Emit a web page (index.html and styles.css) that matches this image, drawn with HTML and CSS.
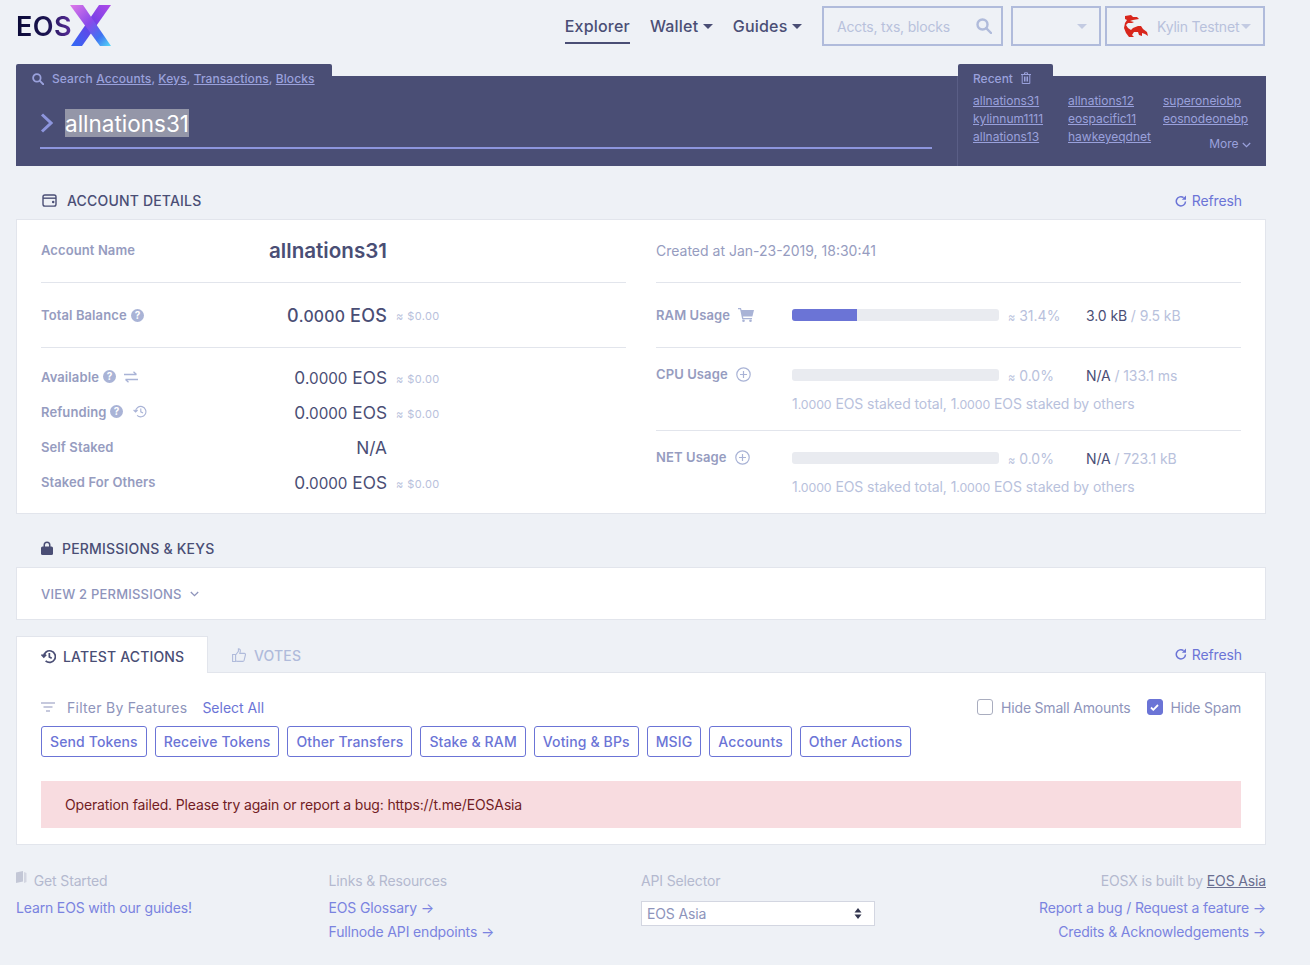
FILE: index.html
```html
<!DOCTYPE html>
<html>
    <head>
        <title>EOSX</title>
        <link rel="stylesheet" href="styles.css">
    </head>
    <body>
        <header class="topbar">
            <a class="logo">
                <span class="logo-text">EOS</span>
                <svg class="logo-x" width="41" height="41" viewBox="0 0 41 41">
                    <defs>
                        <linearGradient id="x-a" x1="0" y1="0" x2="1" y2="1">
                            <stop offset="0" stop-color="#e07ae8"/>
                            <stop offset="0.45" stop-color="#8a4aea"/>
                            <stop offset="0.75" stop-color="#3f73f2"/>
                            <stop offset="1" stop-color="#55dcf7"/>
                        </linearGradient>
                        <linearGradient id="x-b" x1="1" y1="0" x2="0" y2="1">
                            <stop offset="0" stop-color="#b04ae8"/>
                            <stop offset="0.5" stop-color="#6a3fe6"/>
                            <stop offset="1" stop-color="#2f6cf5"/>
                        </linearGradient>
                    </defs>
                    <polygon points="29,0 41,0 12,41 1,41" fill="url(#x-b)"/>
                    <polygon points="0,0 13,0 41,41 30,41" fill="url(#x-a)"/>
                </svg>
            </a>
            <nav class="nav">
                <a class="nav-link active">Explorer</a>
                <a class="nav-link">Wallet <i class="caret"></i></a>
                <a class="nav-link">Guides <i class="caret"></i></a>
            </nav>
            <div class="box box-search">
                <span>Accts, txs, blocks</span>
                <svg width="16" height="16" viewBox="0 0 16 16" fill="none" stroke="#b0bbdb" stroke-width="2.4"><circle cx="6.5" cy="6.5" r="5"/><path d="M10.2 10.2L15 15" stroke-linecap="round"/></svg>
            </div>
            <div class="box box-empty"><i class="caret light"></i></div>
            <div class="box box-net">
                <svg class="dragon" width="26" height="24" viewBox="0 0 26 24" fill="#d8261c">
                    <path d="M2 2L8 1l2 2h4l2 2-6 1-3 1 4 1-2 1H5L3 11l2 3 3 2 2-2 5-2h3l2 3 4 3 1 4-3-2-3-1v3l-3-1-1-3h-4l-2 3 2 2H6l-3-4-2-5 1-5 2-3-2-1z"/>
                </svg>
                <span>Kylin Testnet</span>
                <i class="caret light"></i>
            </div>
        </header>

        <section class="hero">
            <div class="hero-search">
                <div class="hero-tab search-tab">
                    <svg width="12" height="12" viewBox="0 0 16 16" fill="none" stroke="#9aa1dc" stroke-width="2.4"><circle cx="6.5" cy="6.5" r="5"/><path d="M10.2 10.2L15 15" stroke-linecap="round"/></svg>
                    <span>Search <u>Accounts</u>, <u>Keys</u>, <u>Transactions</u>, <u>Blocks</u></span>
                </div>
                <div class="search-line">
                    <svg width="13" height="20" viewBox="0 0 13 20" fill="none" stroke="#8d95dd" stroke-width="3"><path d="M2 1.5l9 8.5-9 8.5"/></svg>
                    <span class="search-value">allnations31</span>
                </div>
            </div>
            <div class="hero-recent">
                <div class="hero-tab recent-tab">
                    <span>Recent</span>
                    <svg width="10" height="12" viewBox="0 0 10 12" fill="none" stroke="#9aa1dc" stroke-width="1"><path d="M0 2.5h10M3.5 2.5V.8h3v1.7M1.2 2.5v9h7.6v-9M3.5 4.5v5M5 4.5v5M6.5 4.5v5"/></svg>
                </div>
                <div class="recent-grid">
                    <a>allnations31</a><a>allnations12</a><a>superoneiobp</a>
                    <a>kylinnum1111</a><a>eospacific11</a><a>eosnodeonebp</a>
                    <a>allnations13</a><a>hawkeyeqdnet</a>
                </div>
                <div class="recent-more">More <svg width="9" height="6" viewBox="0 0 9 6" fill="none" stroke="#9aa1dc" stroke-width="1.2"><path d="M.8 1l3.7 3.7L8.2 1"/></svg></div>
            </div>
        </section>

        <div class="section-title">
            <svg class="wallet" width="15" height="13" viewBox="0 0 16 14" fill="none" stroke="#4a4e75" stroke-width="1.5"><rect x="1" y="1" width="14" height="12" rx="2"/><path d="M1 4.5h14"/><circle cx="12" cy="8.5" r=".6" fill="#4a4e75"/></svg>
            <h2>ACCOUNT DETAILS</h2>
            <a class="refresh">
                <svg width="12" height="12" viewBox="0 0 12 12" fill="none" stroke="#6b74d6" stroke-width="1.5"><path d="M10.5 6.5A4.6 4.6 0 1 1 8.6 2.6"/><path d="M11 .6v4.2H6.8z" fill="#6b74d6" stroke="none"/></svg>
                Refresh
            </a>
        </div>

        <section class="card details">
            <div class="details-col">
                <div class="row row-name">
                    <span class="label">Account Name</span>
                    <span class="account-name">allnations31</span>
                </div>
                <div class="row row-total">
                    <span class="label">Total Balance <svg class="help" width="13" height="13" viewBox="0 0 13 13"><circle cx="6.5" cy="6.5" r="6.5" fill="#a9b3d6"/><text x="6.5" y="10" text-anchor="middle" class="help-q">?</text></svg></span>
                    <span class="value strong">0<small>.0000</small> EOS</span>
                    <span class="usd">≈ $0.00</span>
                </div>
                <div class="balances">
                    <div class="row">
                        <span class="label">Available <svg class="help" width="13" height="13" viewBox="0 0 13 13"><circle cx="6.5" cy="6.5" r="6.5" fill="#a9b3d6"/><text x="6.5" y="10" text-anchor="middle" class="help-q">?</text></svg>
                            <svg class="extra" width="14" height="12" viewBox="0 0 14 12" fill="none" stroke="#a9b3d6" stroke-width="1.3"><path d="M0 3.5h12.5M9.5.8l3 2.7M14 8.5H1.5M4.5 11.2l-3-2.7"/></svg></span>
                        <span class="value">0<small>.0000</small> EOS</span>
                        <span class="usd">≈ $0.00</span>
                    </div>
                    <div class="row">
                        <span class="label">Refunding <svg class="help" width="13" height="13" viewBox="0 0 13 13"><circle cx="6.5" cy="6.5" r="6.5" fill="#a9b3d6"/><text x="6.5" y="10" text-anchor="middle" class="help-q">?</text></svg>
                            <svg class="extra wide" width="14" height="13" viewBox="0 0 14 13" fill="none" stroke="#a9b3d6" stroke-width="1.1"><path d="M2.5 6.5a5.2 5.2 0 1 1 1.6 3.9M.6 5l2 2 2-2M7.8 3.5v3.3l2.2 1.2"/></svg></span>
                        <span class="value">0<small>.0000</small> EOS</span>
                        <span class="usd">≈ $0.00</span>
                    </div>
                    <div class="row">
                        <span class="label">Self Staked</span>
                        <span class="value">N/A</span>
                    </div>
                    <div class="row">
                        <span class="label">Staked For Others</span>
                        <span class="value">0<small>.0000</small> EOS</span>
                        <span class="usd">≈ $0.00</span>
                    </div>
                </div>
            </div>
            <div class="details-col">
                <div class="row row-name created">Created at Jan-23-2019, 18:30:41</div>
                <div class="usage usage-ram">
                    <div class="usage-line">
                        <span class="label">RAM Usage
                            <svg class="extra" width="16" height="14" viewBox="0 0 16 14" fill="#a9b3d6"><path d="M0 0h3l.5 2H16l-1.6 6.5H5l.3 1.5H14v1.3H4.2L2.1 1.3H0z"/><circle cx="5.5" cy="12.7" r="1.3"/><circle cx="12.5" cy="12.7" r="1.3"/></svg></span>
                        <div class="bar"><div class="bar-fill" style="width: 31.4%"></div></div>
                        <span class="pct"><small>≈</small> 31.4%</span>
                        <span class="amount"><b>3.0 kB</b> / 9.5 kB</span>
                    </div>
                </div>
                <div class="usage">
                    <div class="usage-line">
                        <span class="label">CPU Usage
                            <svg class="extra plus" width="15" height="15" viewBox="0 0 15 15" fill="none" stroke="#a9b3d6" stroke-width="1.2"><circle cx="7.5" cy="7.5" r="6.7"/><path d="M7.5 4v7M4 7.5h7"/></svg></span>
                        <div class="bar"></div>
                        <span class="pct"><small>≈</small> 0.0%</span>
                        <span class="amount"><b>N/A</b> / 133.1 ms</span>
                    </div>
                    <p class="staked">1<small>.0000</small> EOS staked total, 1<small>.0000</small> EOS staked by others</p>
                </div>
                <div class="usage last">
                    <div class="usage-line">
                        <span class="label">NET Usage
                            <svg class="extra plus" width="15" height="15" viewBox="0 0 15 15" fill="none" stroke="#a9b3d6" stroke-width="1.2"><circle cx="7.5" cy="7.5" r="6.7"/><path d="M7.5 4v7M4 7.5h7"/></svg></span>
                        <div class="bar"></div>
                        <span class="pct"><small>≈</small> 0.0%</span>
                        <span class="amount"><b>N/A</b> / 723.1 kB</span>
                    </div>
                    <p class="staked">1<small>.0000</small> EOS staked total, 1<small>.0000</small> EOS staked by others</p>
                </div>
            </div>
        </section>

        <div class="section-title perm-title">
            <svg class="lock" width="12" height="14" viewBox="0 0 12 14" fill="#4a4e75"><path d="M2.5 6V4a3.5 3.5 0 0 1 7 0v2H8V4a2 2 0 0 0-4 0v2z"/><rect y="5.5" width="12" height="8.5" rx="1.5"/></svg>
            <h2>PERMISSIONS &amp; KEYS</h2>
        </div>
        <section class="card perms">
            <span>VIEW 2 PERMISSIONS</span>
            <svg width="9" height="6" viewBox="0 0 9 6" fill="none" stroke="#8e94bb" stroke-width="1.3"><path d="M.8 1l3.7 3.7L8.2 1"/></svg>
        </section>

        <div class="tabs">
            <div class="tab active">
                <svg width="15" height="15" viewBox="0 0 14 14" fill="none" stroke="#4a4e75" stroke-width="1.6"><path d="M2.6 7a5.4 5.4 0 1 1 1.7 4M.4 5.2l2.2 2.2 2.2-2.2M7.8 3.8v3.6l2.2 1.2"/></svg>
                LATEST ACTIONS
            </div>
            <div class="tab">
                <svg width="14" height="14" viewBox="0 0 14 14" fill="none" stroke="#b0bbdb" stroke-width="1.1"><path d="M.6 6.5h3v7h-3zM3.6 7l2.8-3.6V.8c1.6 0 2.2 1.3 1.8 2.8L7.8 5.4h4.6c1 0 1.2.9 1 1.6l-1.3 5.4c-.2.7-.7 1-1.3 1H5.5c-.8 0-1.3-.3-1.9-.7"/></svg>
                VOTES
            </div>
            <a class="refresh">
                <svg width="12" height="12" viewBox="0 0 12 12" fill="none" stroke="#6b74d6" stroke-width="1.5"><path d="M10.5 6.5A4.6 4.6 0 1 1 8.6 2.6"/><path d="M11 .6v4.2H6.8z" fill="#6b74d6" stroke="none"/></svg>
                Refresh
            </a>
        </div>
        <section class="card actions">
            <div class="filter-line">
                <svg width="14" height="10" viewBox="0 0 14 10" fill="none" stroke="#8e94bb" stroke-width="1.2"><path d="M0 1h14M2.5 5h9M5 9h4"/></svg>
                <span class="filter-label">Filter By Features</span>
                <a class="select-all">Select All</a>
                <label class="check"><i class="box-check"></i>Hide Small Amounts</label>
                <label class="check"><i class="box-check on"><svg width="9" height="7" viewBox="0 0 9 7" fill="none" stroke="#fff" stroke-width="1.8"><path d="M1 3.5l2.3 2.3L8 1"/></svg></i>Hide Spam</label>
            </div>
            <div class="filters">
                <button>Send Tokens</button>
                <button>Receive Tokens</button>
                <button>Other Transfers</button>
                <button>Stake &amp; RAM</button>
                <button>Voting &amp; BPs</button>
                <button>MSIG</button>
                <button>Accounts</button>
                <button>Other Actions</button>
            </div>
            <div class="alert">Operation failed. Please try again or report a bug: https://t.me/EOSAsia</div>
        </section>

        <footer class="footer">
            <div class="foot-col">
                <h4 class="foot-first"><svg width="11" height="13" viewBox="0 0 11 13" fill="#c3c7d6"><path d="M0 1.5L7 0v10.5L0 12z"/><path d="M8 1l2.5 1v9L8 12z" fill="#d3d6e1"/></svg> Get Started</h4>
                <a>Learn EOS with our guides!</a>
            </div>
            <div class="foot-col">
                <h4>Links &amp; Resources</h4>
                <a>EOS Glossary →</a>
                <a>Fullnode API endpoints →</a>
            </div>
            <div class="foot-col">
                <h4>API Selector</h4>
                <div class="api-select">
                    <span>EOS Asia</span>
                    <svg width="8" height="11" viewBox="0 0 8 11" fill="#33364f"><path d="M4 0l3.5 4.4h-7zM4 11L.5 6.6h7z"/></svg>
                </div>
            </div>
            <div class="foot-col right">
                <h4>EOSX is built by <u>EOS Asia</u></h4>
                <a>Report a bug / Request a feature →</a>
                <a>Credits &amp; Acknowledgements →</a>
            </div>
        </footer>
    </body>
</html>
```

FILE: styles.css
```css
body {
    margin: 0;
    padding: 0 44px 0 16px;
    height: 965px;
    box-sizing: border-box;
    overflow: hidden;
    background-color: #eef1f6;
    color: #4a4e75;
    font-family: Inter, "Liberation Sans", sans-serif;
    font-size: 14px;
}
a {
    color: inherit;
}
.caret {
    display: inline-block;
    border: 5px solid transparent;
    border-top-color: #4a4e75;
    border-bottom: 0;
    vertical-align: 3px;
}
.caret.light {
    border-top-color: #c3cbe2;
}

/* top bar */
.topbar {
    height: 64px;
    display: flex;
    align-items: flex-start;
    padding-right: 1px;
}
.logo {
    display: flex;
    margin-top: 5px;
    height: 41px;
}
.logo-text {
    font-size: 27px;
    font-weight: 600;
    line-height: 41px;
    margin-top: 1px;
    width: 56px;
    letter-spacing: 0.4px;
    background: linear-gradient(90deg, #0b0a38, #1a1450 55%, #5a2c9c);
    -webkit-background-clip: text;
    background-clip: text;
    color: transparent;
}
.logo-x {
    margin-left: -2px;
}
.nav {
    display: flex;
    gap: 20px;
    margin-left: auto;
    margin-right: 20px;
}
.nav-link {
    display: block;
    height: 29px;
    padding-top: 15px;
    font-size: 16px;
    line-height: 23px;
    font-weight: 500;
    letter-spacing: 0.2px;
    white-space: nowrap;
}
.nav-link.active {
    border-bottom: 2px solid #4a4e75;
    height: 27px;
}
.box {
    height: 40px;
    margin-top: 6px;
    box-sizing: border-box;
    border: 2px solid #b0bbdb;
    display: flex;
    align-items: center;
    color: #b8c1dc;
}
.box-search {
    width: 181px;
    padding: 0 9px 0 13px;
    justify-content: space-between;
    letter-spacing: -0.2px;
}
.box-empty {
    width: 90px;
    margin-left: 8px;
    justify-content: flex-end;
    padding-right: 12px;
}
.box-net {
    width: 160px;
    margin-left: 4px;
    padding-left: 16px;
    gap: 8px;
    letter-spacing: -0.2px;
}
.box-net span {
    white-space: nowrap;
}
.box-net .caret {
    margin-left: -6px;
}

/* search panel */
.hero {
    height: 102px;
    display: grid;
    grid-template-columns: 941px 309px;
    background: linear-gradient(transparent 12px, #4a4e75 12px);
    color: #9aa1dc;
}
.hero-tab {
    background-color: #4a4e75;
    border-radius: 2px 2px 0 0;
    display: flex;
    align-items: center;
    font-size: 12px;
    font-weight: 500;
    height: 29px;
}
.search-tab {
    width: 300px;
    padding-left: 16px;
    gap: 8px;
    white-space: nowrap;
    letter-spacing: 0.1px;
}
.search-line {
    margin: 16px 25px 0 24px;
    display: flex;
    align-items: center;
    gap: 12px;
    border-bottom: 2px solid #8d95dd;
    padding-bottom: 10px;
}
.search-value {
    background-color: #9496a8;
    color: #fff;
    font-size: 22.5px;
    line-height: 26px;
    padding-top: 2px;
}
.hero-recent {
    border-left: 1px solid #5a5e86;
    position: relative;
    margin-top: 12px;
}
.recent-tab {
    width: 80px;
    height: 28px;
    margin-top: -12px;
    padding-left: 15px;
    gap: 8px;
}
.recent-grid {
    display: grid;
    grid-template-columns: 95px 95px auto;
    grid-auto-rows: 18px;
    padding-left: 15px;
    font-size: 12px;
    line-height: 18px;
}
.recent-grid a {
    text-decoration: underline;
    white-space: nowrap;
}
.recent-more {
    position: absolute;
    right: 15px;
    bottom: 15px;
    font-size: 12px;
    line-height: 14px;
}

/* cards */
.section-title {
    height: 53px;
    padding: 16px 24px 0;
    box-sizing: border-box;
    display: flex;
    align-items: center;
    gap: 10px;
}
.section-title h2 {
    margin: 0;
    font-size: 14px;
    font-weight: 500;
    letter-spacing: 0.18px;
}
.wallet {
    margin-left: 2px;
}
.lock {
    margin-left: 1px;
    margin-right: -1px;
}
.refresh {
    margin-left: auto;
    color: #6b74d6;
    display: flex;
    align-items: center;
    gap: 5px;
    font-size: 14px;
    letter-spacing: -0.1px;
}
.card {
    background-color: #fff;
    border: 1px solid #e2e5ec;
    box-sizing: border-box;
}
.details {
    height: 295px;
    padding: 0 24px;
    display: grid;
    grid-template-columns: 585px 585px;
    column-gap: 30px;
}
.row {
    display: grid;
    grid-template-columns: 346px auto;
    column-gap: 9px;
    align-items: center;
    justify-content: start;
    height: 35px;
    box-sizing: border-box;
}
.row-name {
    height: 63px;
    padding-bottom: 2px;
    border-bottom: 1px solid #e2e5ec;
}
.row-total {
    height: 65px;
    border-bottom: 1px solid #e2e5ec;
}
.balances {
    padding-top: 11px;
}
.balances .value {
    padding-top: 1px;
}
.balances .usd {
    padding-top: 4px;
}
.label {
    grid-column: 1;
    color: #969cc0;
    font-size: 13px;
    font-weight: 600;
    letter-spacing: 0.1px;
    display: flex;
    align-items: center;
    gap: 4px;
    white-space: nowrap;
}
.row .value,
.account-name {
    grid-column: 1;
    grid-row: 1;
    justify-self: end;
    font-size: 17.3px;
}
.row .label {
    grid-row: 1;
}
.value small,
.staked small {
    font-size: 0.88em;
}
.row .value.strong {
    font-size: 18px;
    font-weight: 500;
    letter-spacing: 0.2px;
}
.account-name {
    font-size: 20.6px;
    font-weight: 600;
}
.usd {
    color: #b8c1dc;
    font-size: 11px;
    letter-spacing: 0.4px;
    padding-top: 2px;
}
.extra {
    margin-left: 4px;
}
.extra.wide {
    margin-left: 6px;
}
.help-q {
    font: 700 10px Inter, sans-serif;
    fill: #fff;
}
.created {
    display: flex;
    color: #969cc0;
    font-size: 14px;
}
.usage {
    height: 83px;
    box-sizing: border-box;
    padding-top: 16px;
    border-bottom: 1px solid #e2e5ec;
}
.usage.usage-ram {
    height: 65px;
    padding-top: 21px;
}
.usage.last {
    border-bottom: 0;
}
.usage:not(.usage-ram) .label {
    margin-top: -2px;
}
.usage-line {
    display: grid;
    grid-template-columns: 136px 207px 87px auto;
    align-items: center;
    height: 22px;
}
.bar {
    height: 12px;
    border-radius: 3px;
    background-color: #e9ebf0;
    overflow: hidden;
}
.bar-fill {
    height: 100%;
    background-color: #6b74d6;
}
.pct {
    color: #b8c1dc;
    padding-left: 9px;
    font-size: 14px;
}
.pct small {
    font-size: 11px;
}
.amount {
    color: #b8c1dc;
    font-size: 14px;
    letter-spacing: -0.1px;
    white-space: nowrap;
}
.amount b {
    color: #4a4e75;
    font-weight: 400;
}
.staked {
    margin: 7px 0 0 136px;
    line-height: 22px;
    color: #b8c1dc;
    letter-spacing: -0.08px;
    white-space: nowrap;
}
.perm-title {
    padding-top: 15px;
}
.perm-title h2 {
    letter-spacing: 0.2px;
}
.perms {
    height: 53px;
    padding: 0 24px;
    display: flex;
    align-items: center;
    gap: 8px;
    color: #8e94bb;
    font-size: 13px;
    font-weight: 500;
    letter-spacing: 0.2px;
}

/* latest actions */
.tabs {
    margin-top: 16px;
    height: 36px;
    display: flex;
    align-items: center;
    padding-right: 24px;
}
.tab {
    height: 36px;
    box-sizing: border-box;
    padding: 2px 0 0 24px;
    width: 192px;
    display: flex;
    align-items: center;
    gap: 8px;
    color: #b0bbdb;
    font-size: 14px;
    font-weight: 500;
    letter-spacing: 0.15px;
    white-space: nowrap;
}
.tab.active {
    gap: 7px;
    background-color: #fff;
    border: 1px solid #e2e5ec;
    border-bottom: 0;
    color: #4a4e75;
    margin-bottom: -1px;
    height: 37px;
    position: relative;
}
.actions {
    height: 173px;
    padding: 23px 24px 24px;
}
.filter-line {
    display: flex;
    align-items: center;
    height: 22px;
    color: #8e94bb;
}
.filter-label {
    margin-left: 12px;
    letter-spacing: 0.28px;
}
.select-all {
    margin-left: 15px;
    color: #6b74d6;
}
.check {
    display: flex;
    align-items: center;
    gap: 8px;
    letter-spacing: -0.2px;
}
.select-all + .check {
    margin-left: auto;
}
.check + .check {
    margin-left: 16px;
}
.box-check {
    width: 16px;
    height: 16px;
    box-sizing: border-box;
    border: 1px solid #a9adbf;
    border-radius: 3px;
    display: flex;
    align-items: center;
    justify-content: center;
}
.box-check.on {
    background-color: #6b74d6;
    border-color: #6b74d6;
}
.filters {
    display: flex;
    gap: 8px;
    margin-top: 8px;
}
.filters button {
    height: 31px;
    padding: 0 8px;
    border: 1px solid #6b74d6;
    border-radius: 3px;
    background-color: #fff;
    color: #6b74d6;
    font-family: inherit;
    font-size: 14px;
    font-weight: 500;
    letter-spacing: 0.13px;
}
.alert {
    margin-top: 24px;
    height: 47px;
    padding: 0 24px;
    display: flex;
    align-items: center;
    background-color: #f8dce0;
    color: #721c24;
    letter-spacing: -0.15px;
}

/* footer */
.footer {
    display: grid;
    grid-template-columns: repeat(4, 312.5px);
    padding-top: 25px;
    color: #7a83e0;
    letter-spacing: -0.15px;
}
.foot-col a {
    display: block;
    height: 24px;
    line-height: 24px;
    white-space: nowrap;
}
.foot-col h4 {
    margin: 0 0 4px;
    font-size: 14px;
    font-weight: 400;
    line-height: 22px;
    color: #b4b9cf;
}
.foot-first svg {
    vertical-align: 2px;
    margin-right: 3px;
}
.foot-col u {
    color: #6a6e8f;
}
.right {
    text-align: right;
}
.api-select {
    width: 234px;
    height: 25px;
    margin-top: 9px;
    box-sizing: border-box;
    background-color: #fff;
    border: 1px solid #d3d6e1;
    padding: 0 12px 0 5px;
    display: flex;
    align-items: center;
    justify-content: space-between;
    color: #8e94bb;
}
```
